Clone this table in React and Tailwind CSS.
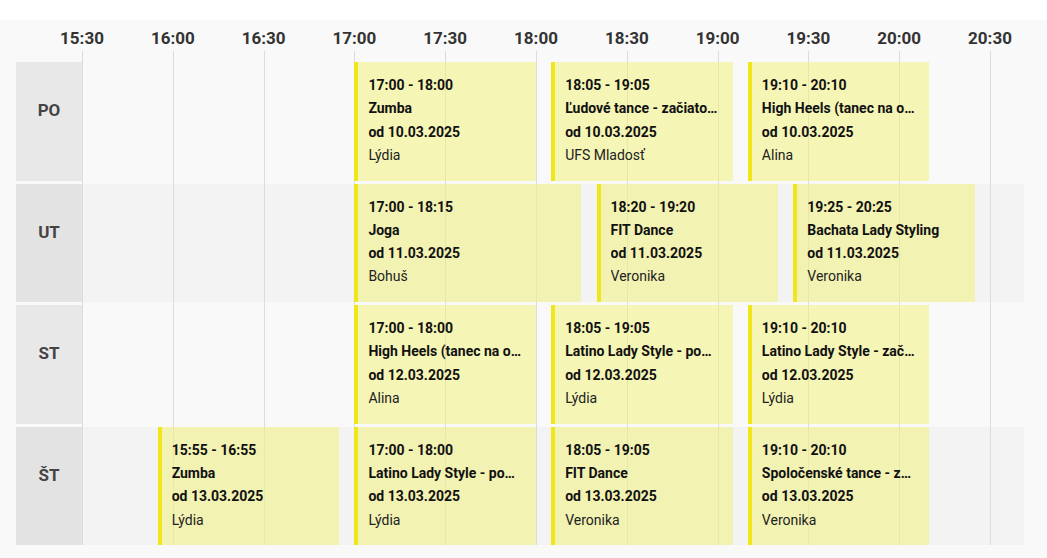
const PX_PER_MIN = 908 / 300
const START = 15 * 60 + 30

const times = ['15:30', '16:00', '16:30', '17:00', '17:30', '18:00', '18:30', '19:00', '19:30', '20:00', '20:30']

const toMin = t => {
  const [h, m] = t.split(':').map(Number)
  return h * 60 + m
}

const days = [
  {
    day: 'PO',
    bg: 'bg-[#f9f9f9]',
    dayBg: 'bg-[#e8e8e8]',
    lessons: [
      { from: '17:00', to: '18:00', name: 'Zumba', date: '10.03.2025', who: 'Lýdia' },
      { from: '18:05', to: '19:05', name: 'Ľudové tance - začiatočníci', date: '10.03.2025', who: 'UFS Mladosť' },
      { from: '19:10', to: '20:10', name: 'High Heels (tanec na opätkoch)', date: '10.03.2025', who: 'Alina' },
    ],
  },
  {
    day: 'UT',
    bg: 'bg-[#f3f3f3]',
    dayBg: 'bg-[#e3e3e3]',
    lessons: [
      { from: '17:00', to: '18:15', name: 'Joga', date: '11.03.2025', who: 'Bohuš' },
      { from: '18:20', to: '19:20', name: 'FIT Dance', date: '11.03.2025', who: 'Veronika' },
      { from: '19:25', to: '20:25', name: 'Bachata Lady Styling', date: '11.03.2025', who: 'Veronika' },
    ],
  },
  {
    day: 'ST',
    bg: 'bg-[#f9f9f9]',
    dayBg: 'bg-[#e8e8e8]',
    lessons: [
      { from: '17:00', to: '18:00', name: 'High Heels (tanec na opätkoch)', date: '12.03.2025', who: 'Alina' },
      { from: '18:05', to: '19:05', name: 'Latino Lady Style - pokročilí', date: '12.03.2025', who: 'Lýdia' },
      { from: '19:10', to: '20:10', name: 'Latino Lady Style - začiatočníci', date: '12.03.2025', who: 'Lýdia' },
    ],
  },
  {
    day: 'ŠT',
    bg: 'bg-[#f3f3f3]',
    dayBg: 'bg-[#e3e3e3]',
    lessons: [
      { from: '15:55', to: '16:55', name: 'Zumba', date: '13.03.2025', who: 'Lýdia' },
      { from: '17:00', to: '18:00', name: 'Latino Lady Style - pokročilí', date: '13.03.2025', who: 'Lýdia' },
      { from: '18:05', to: '19:05', name: 'FIT Dance', date: '13.03.2025', who: 'Veronika' },
      { from: '19:10', to: '20:10', name: 'Spoločenské tance - začiatočníci', date: '13.03.2025', who: 'Veronika' },
    ],
  },
]

function Lesson({ l }) {
  const left = (toMin(l.from) - START) * PX_PER_MIN
  const width = (toMin(l.to) - toMin(l.from)) * PX_PER_MIN
  return (
    <div
      className="absolute top-0 bottom-0 z-[2] border-l-4 border-[#f0e71a] bg-[#f1f171]/50 pt-[12px] pl-[10px] pr-[14px] text-[14px] leading-[23.3px] text-[#111]"
      style={{ left, width }}
    >
      <div className="font-bold truncate">{l.from} - {l.to}</div>
      <div className="font-bold truncate">{l.name}</div>
      <div className="font-bold truncate">od {l.date}</div>
      <div className="truncate text-[#222]">{l.who}</div>
    </div>
  )
}

export default function App() {
  return (
    <div className="min-h-screen bg-white font-['Roboto','Liberation_Sans',sans-serif]">
      <div className="mt-5 bg-[#f9f9f9] pl-4 pr-[23px] pb-[13px]">
        <div className="relative w-[1008px]">
          {/* time labels */}
          <div className="relative h-[42px]">
            {times.map((t, i) => (
              <span
                key={t}
                className="absolute top-[8px] -translate-x-1/2 text-[17px] leading-[20px] font-bold text-[#333]"
                style={{ left: 66 + i * 90.8 }}
              >
                {t}
              </span>
            ))}
          </div>

          {/* grid lines */}
          {times.map((t, i) => (
            <div
              key={t}
              className="absolute top-[31px] bottom-0 w-px bg-[#dcdcdc] z-[1]"
              style={{ left: 66 + Math.round(i * 90.8) }}
            />
          ))}

          <div className="flex flex-col gap-[3px]">
            {days.map(d => (
              <div key={d.day} className="flex h-[118.6px]">
                <div className={`w-[66px] shrink-0 ${d.dayBg} pt-[38px] text-center text-[17px] leading-[20px] font-bold text-[#444]`}>
                  {d.day}
                </div>
                <div className={`relative flex-1 ${d.bg}`}>
                  {d.lessons.map((l, i) => (
                    <Lesson key={i} l={l} />
                  ))}
                </div>
              </div>
            ))}
          </div>
        </div>
      </div>
    </div>
  )
}
